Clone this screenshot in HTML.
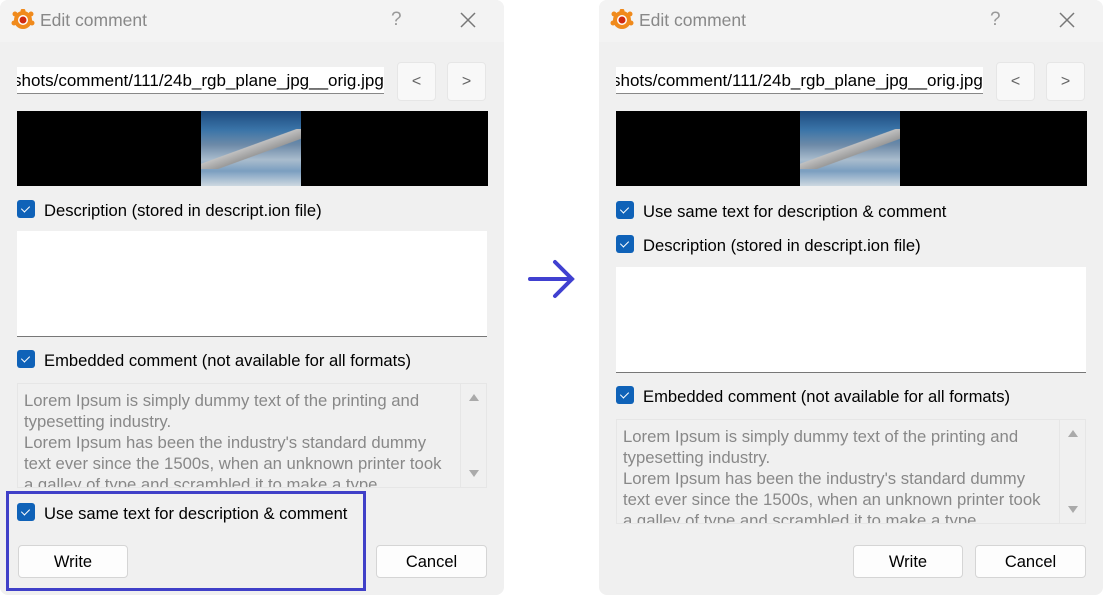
<!DOCTYPE html>
<html><head><style>
*{margin:0;padding:0;box-sizing:border-box}
body{width:1103px;height:595px;background:#fff;position:relative;overflow:hidden;font-family:"Liberation Sans",sans-serif;font-size:16px;color:#000}
.dlg{position:absolute;top:0;width:504px;height:595px;background:#f0f0f0;border-radius:8px;overflow:hidden}
.title{position:absolute;left:0;top:0;width:100%;height:42px;background:#f3f3f3}
.title .t{position:absolute;left:40px;top:10px;font-size:17.5px;color:#888}
.title .q{position:absolute;left:391px;top:9px;font-size:19px;color:#999}
.title .x{position:absolute;left:458px;top:10px}
.logo{position:absolute;left:11px;top:9px;width:24px;height:22px}
.a{position:absolute}
.path{left:17px;top:67px;width:367px;height:27px;background:#fff;border-bottom:1px solid #888;overflow:hidden;white-space:nowrap;font-size:17px;line-height:27px}
.path span{position:relative;left:-4px}
.nb{width:39px;height:39px;background:#f8f8f8;border:1px solid #e6e6e6;border-radius:4px;text-align:center;line-height:37px;color:#666;font-size:16px}
.img{left:17px;top:111px;width:471px;height:75px;background:#000}
.photo{position:absolute;left:184px;top:0;width:100px;height:75px;background:linear-gradient(180deg,#1d4a7e 0%,#3a74a8 25%,#6d8aa8 45%,#a9bccd 65%,#7b9ec0 80%,#cdd8e0 100%)}
.wing{position:absolute;left:184px;top:18px;width:100px;height:40px;background:linear-gradient(160deg,transparent 45%,#c0c0c0 46%,#9a9a9a 60%,transparent 61%)}
.cb{width:18px;height:18px;background:#0f62b8;border-radius:3px}
.cb:after{content:"";position:absolute;left:6px;top:4px;width:4px;height:7px;border:solid #fff;border-width:0 1px 1px 0;transform:rotate(45deg)}
.lbl{font-size:16.6px;white-space:nowrap;margin-top:1px}
.wt{background:#fff;border-bottom:1px solid #777}
.gt{background:#f0f0f0;border:1px solid #e6e6e6;color:#888;font-size:16.7px;line-height:21px;padding:6px 0 0 6px;overflow:hidden}
.sb{position:absolute;right:0;top:0;width:26px;height:100%;border-left:1px solid #e6e6e6;background:#f0f0f0}
.sb .u{position:absolute;left:8px;top:10px;width:0;height:0;border:5px solid transparent;border-bottom:7px solid #aaa;border-top:0}
.sb .d{position:absolute;left:8px;bottom:10px;width:0;height:0;border:5px solid transparent;border-top:7px solid #aaa;border-bottom:0}
.btn{height:33px;background:#fdfdfd;border:1px solid #d5d5d5;border-radius:4px;text-align:center;line-height:33px;font-size:16.5px}
</style></head><body>

<!-- Left dialog -->
<div class="dlg" style="left:0">
 <div class="title">
  <svg class="logo" viewBox="0 0 24 22"><circle cx="12" cy="11" r="9" fill="#f08a1c"/><g fill="#f08a1c"><circle cx="12" cy="2" r="2.5"/><circle cx="4" cy="5" r="2.5"/><circle cx="20" cy="5" r="2.5"/><circle cx="3" cy="14" r="2.5"/><circle cx="21" cy="14" r="2.5"/></g><circle cx="12" cy="11" r="5" fill="#fff"/><circle cx="12" cy="11" r="3.5" fill="#d02a10"/></svg>
  <div class="t">Edit comment</div><div class="q">?</div>
  <svg class="x" width="20" height="20" viewBox="0 0 20 20"><path d="M3 3L17 17M17 3L3 17" stroke="#777" stroke-width="1.5"/></svg>
 </div>
 <div class="a path"><span>shots/comment/111/24b_rgb_plane_jpg__orig.jpg</span></div>
 <div class="a nb" style="left:397px;top:62px">&lt;</div>
 <div class="a nb" style="left:447px;top:62px">&gt;</div>
 <div class="a img"><div class="photo"></div><div class="wing"></div></div>
 <div class="a cb" style="left:17px;top:200px"></div><div class="a lbl" style="left:44px;top:200px">Description (stored in descript.ion file)</div>
 <div class="a wt" style="left:17px;top:231px;width:470px;height:106px"></div>
 <div class="a cb" style="left:17px;top:350px"></div><div class="a lbl" style="left:44px;top:350px">Embedded comment (not available for all formats)</div>
 <div class="a gt" style="left:17px;top:383px;width:470px;height:105px"><div style="width:425px">Lorem Ipsum is simply dummy text of the printing and typesetting industry.<br>Lorem Ipsum has been the industry's standard dummy text ever since the 1500s, when an unknown printer took a galley of type and scrambled it to make a type specimen</div><div class="sb"><div class="u"></div><div class="d"></div></div></div>
 <div class="a cb" style="left:17px;top:503px"></div><div class="a lbl" style="left:44px;top:503px">Use same text for description &amp; comment</div>
 <div class="a btn" style="left:18px;top:545px;width:110px">Write</div>
 <div class="a btn" style="left:376px;top:545px;width:111px">Cancel</div>
 <div class="a" style="left:6px;top:491px;width:360px;height:100px;border:3px solid #4040c8"></div>
</div>

<svg class="a" style="left:520px;top:255px" width="70" height="50" viewBox="0 0 70 50"><path d="M10 24H52M35 7L52 24L35 41" stroke="#4040d0" stroke-width="4" fill="none" stroke-linecap="round"/></svg>

<!-- Right dialog -->
<div class="dlg" style="left:599px">
 <div class="title">
  <svg class="logo" viewBox="0 0 24 22"><circle cx="12" cy="11" r="9" fill="#f08a1c"/><g fill="#f08a1c"><circle cx="12" cy="2" r="2.5"/><circle cx="4" cy="5" r="2.5"/><circle cx="20" cy="5" r="2.5"/><circle cx="3" cy="14" r="2.5"/><circle cx="21" cy="14" r="2.5"/></g><circle cx="12" cy="11" r="5" fill="#fff"/><circle cx="12" cy="11" r="3.5" fill="#d02a10"/></svg>
  <div class="t">Edit comment</div><div class="q">?</div>
  <svg class="x" width="20" height="20" viewBox="0 0 20 20"><path d="M3 3L17 17M17 3L3 17" stroke="#777" stroke-width="1.5"/></svg>
 </div>
 <div class="a path"><span>shots/comment/111/24b_rgb_plane_jpg__orig.jpg</span></div>
 <div class="a nb" style="left:397px;top:62px">&lt;</div>
 <div class="a nb" style="left:447px;top:62px">&gt;</div>
 <div class="a img"><div class="photo"></div><div class="wing"></div></div>
 <div class="a cb" style="left:17px;top:201px"></div><div class="a lbl" style="left:44px;top:201px">Use same text for description &amp; comment</div>
 <div class="a cb" style="left:17px;top:235px"></div><div class="a lbl" style="left:44px;top:235px">Description (stored in descript.ion file)</div>
 <div class="a wt" style="left:17px;top:267px;width:470px;height:106px"></div>
 <div class="a cb" style="left:17px;top:386px"></div><div class="a lbl" style="left:44px;top:386px">Embedded comment (not available for all formats)</div>
 <div class="a gt" style="left:17px;top:419px;width:470px;height:105px"><div style="width:425px">Lorem Ipsum is simply dummy text of the printing and typesetting industry.<br>Lorem Ipsum has been the industry's standard dummy text ever since the 1500s, when an unknown printer took a galley of type and scrambled it to make a type specimen</div><div class="sb"><div class="u"></div><div class="d"></div></div></div>
 <div class="a btn" style="left:254px;top:545px;width:110px">Write</div>
 <div class="a btn" style="left:376px;top:545px;width:111px">Cancel</div>
</div>
</body></html>
